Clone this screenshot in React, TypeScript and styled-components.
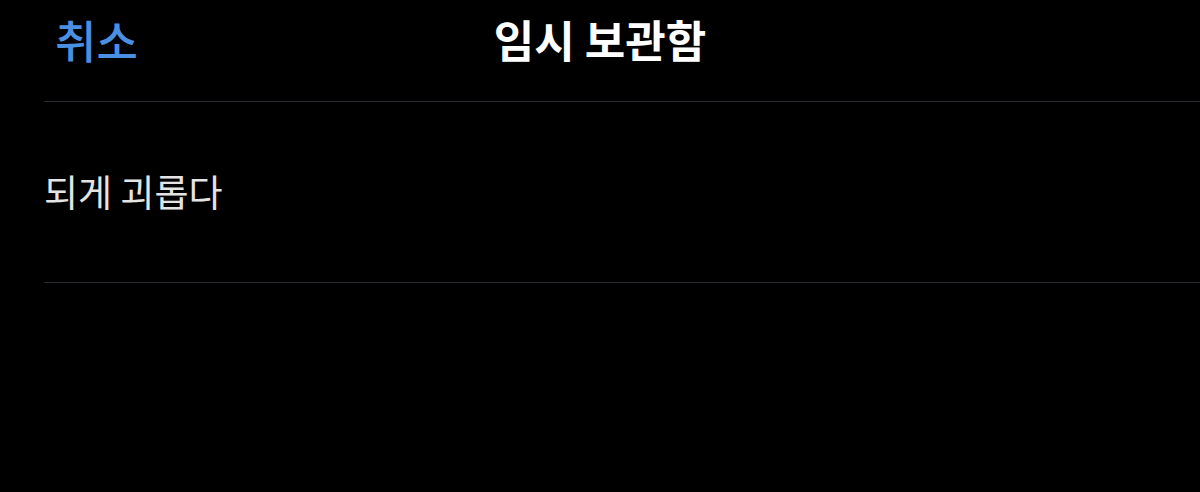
import type { ReactElement } from 'react'
import styled, { createGlobalStyle } from 'styled-components'

const GlobalStyle = createGlobalStyle`
  html, body {
    margin: 0;
    padding: 0;
    background: #000;
  }
  body {
    font-family: 'Noto Sans CJK KR', 'Noto Sans', sans-serif;
  }
`

type DraftType = { id: number; text: string }

const drafts: DraftType[] = [{ id: 1, text: '되게 괴롭다' }]

const App = (): ReactElement => {
  return (
    <>
      <GlobalStyle />
      <Page>
        <NavBar>
          <CancelButton type="button">취소</CancelButton>
          <Title>임시 보관함</Title>
          <span />
        </NavBar>
        <Divider />
        <DraftList>
          {drafts.map(draft => (
            <DraftItem key={draft.id}>
              <DraftText>{draft.text}</DraftText>
            </DraftItem>
          ))}
        </DraftList>
      </Page>
    </>
  )
}

export default App

const Page = styled.div`
  min-height: 100vh;
  background: #000;
  color: #fff;
`

const NavBar = styled.header`
  display: grid;
  grid-template-columns: 1fr auto 1fr;
  align-items: center;
  height: 78px;
  padding-bottom: 23px;
`

const CancelButton = styled.button`
  justify-self: start;
  border: none;
  background: none;
  padding: 0 0 0 55px;
  font-family: inherit;
  font-size: 45px;
  font-weight: 500;
  line-height: 1;
  color: #4a8fe2;
  cursor: pointer;
`

const Title = styled.h1`
  margin: 0;
  font-size: 44px;
  font-weight: 700;
  line-height: 1;
  color: #fff;
`

const Divider = styled.div`
  height: 1px;
  margin-left: 44px;
  background: #2b2b31;
`

const DraftList = styled.ul`
  list-style: none;
  margin: 0;
  padding: 0;
`

const DraftItem = styled.li`
  display: flex;
  align-items: center;
  height: 180px;
  margin-left: 44px;
  border-bottom: 1px solid #2b2b33;
`

const DraftText = styled.span`
  margin-top: -3px;
  font-size: 37px;
  font-weight: 400;
  color: #e4e4e4;
`
